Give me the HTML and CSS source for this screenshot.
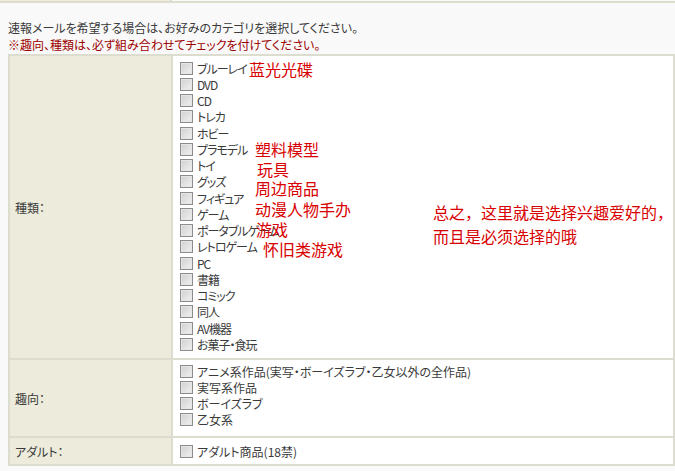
FILE: index.html
```html
<!DOCTYPE html>
<html lang="ja">
  <head>
    <meta charset="UTF-8" />
    <title>カテゴリ選択</title>
    <link rel="stylesheet" href="styles.css">
  </head>
  <body>
    <div class="prev">
      <div class="prev-l"></div>
      <div class="prev-r"></div>
    </div>

    <div class="wrap">
      <p class="lead">速報メールを希望する場合は、お好みのカテゴリを選択してください。</p>
      <p class="warn">※趣向、種類は、必ず組み合わせてチェックを付けてください。</p>

      <table class="cat">
        <tr>
          <th>種類：</th>
          <td class="kind">
            <label class="opt"><input type="checkbox" />ブルーレイ</label>
            <label class="opt"><input type="checkbox" />DVD</label>
            <label class="opt"><input type="checkbox" />CD</label>
            <label class="opt"><input type="checkbox" />トレカ</label>
            <label class="opt"><input type="checkbox" />ホビー</label>
            <label class="opt"><input type="checkbox" />プラモデル</label>
            <label class="opt"><input type="checkbox" />トイ</label>
            <label class="opt"><input type="checkbox" />グッズ</label>
            <label class="opt"><input type="checkbox" />フィギュア</label>
            <label class="opt"><input type="checkbox" />ゲーム</label>
            <label class="opt"><input type="checkbox" />ポータブルゲーム</label>
            <label class="opt"><input type="checkbox" />レトロゲーム</label>
            <label class="opt"><input type="checkbox" />PC</label>
            <label class="opt"><input type="checkbox" />書籍</label>
            <label class="opt"><input type="checkbox" />コミック</label>
            <label class="opt"><input type="checkbox" />同人</label>
            <label class="opt"><input type="checkbox" />AV機器</label>
            <label class="opt"><input type="checkbox" />お菓子・食玩</label>
          </td>
        </tr>
        <tr>
          <th>趣向：</th>
          <td class="taste">
            <label class="opt"><input type="checkbox" />アニメ系作品(実写・ボーイズラブ・乙女以外の全作品)</label>
            <label class="opt"><input type="checkbox" />実写系作品</label>
            <label class="opt"><input type="checkbox" />ボーイズラブ</label>
            <label class="opt"><input type="checkbox" />乙女系</label>
          </td>
        </tr>
        <tr>
          <th>アダルト：</th>
          <td class="adult">
            <label class="opt"><input type="checkbox" />アダルト商品(18禁)</label>
          </td>
        </tr>
      </table>
    </div>

    <!-- 手写的批注 -->
    <span class="note n1">蓝光光碟</span>
    <span class="note n2">塑料模型</span>
    <span class="note n3">玩具</span>
    <span class="note n4">周边商品</span>
    <span class="note n5">动漫人物手办</span>
    <span class="note n6">游戏</span>
    <span class="note n7">怀旧类游戏</span>
    <p class="note sum">总之，这里就是选择兴趣爱好的，<br />而且是必须选择的哦</p>
  </body>
</html>
```

FILE: styles.css
```css
* {
  margin: 0;
  padding: 0;
  box-sizing: border-box;
}
body {
  position: relative;
  background: #f9f9f9;
  color: #3a3a3a;
  font-family: "Noto Sans CJK JP", "Liberation Sans", sans-serif;
  font-size: 12px;
  font-feature-settings: "palt";
}

/* 上一块表格的底边 */
.prev {
  display: flex;
  height: 3px;
  border-bottom: 2px solid #dcdccf;
}
.prev-l {
  width: 172px;
  background: #ecebdc;
  border-right: 2px solid #dcdccf;
}
.prev-r {
  flex: 1;
  background: #f9f9f9;
}

.wrap {
  padding: 16px 0 0 8px;
}
.lead,
.warn {
  line-height: 17px;
  white-space: nowrap;
}
.warn {
  color: #9b0000;
}

table.cat {
  width: 667px;
  margin-top: 1px;
  background: #dcdccf;
  border-spacing: 2px;
}
.cat th {
  width: 161px;
  background: #ecebdc;
  font-weight: normal;
  text-align: left;
  vertical-align: middle;
  padding-left: 5px;
}
.cat td {
  background: #fff;
  vertical-align: top;
  padding-left: 4px;
}
td.kind {
  padding-top: 4px;
  padding-bottom: 5.5px;
  letter-spacing: -1px;
}
td.taste {
  padding-top: 3px;
  padding-bottom: 8px;
}
td.adult {
  padding-top: 5px;
  padding-bottom: 4.75px;
}

.opt {
  display: flex;
  align-items: center;
  height: 16.25px;
  white-space: nowrap;
}
.opt input {
  appearance: none;
  -webkit-appearance: none;
  width: 13px;
  height: 13px;
  margin: 0 4px 0 3px;
  border: 1px solid #8c8c8c;
  background: linear-gradient(135deg, #cfcfcf, #f2f2f2);
  box-shadow: inset 0 0 0 1px #e6e6e6;
}

.note {
  position: absolute;
  color: #d80000;
  font-family: "Noto Sans CJK SC", sans-serif;
  font-size: 16px;
  line-height: 18px;
  white-space: nowrap;
  font-feature-settings: normal;
}
.n1 { left: 249px; top: 59.5px; }
.n2 { left: 255px; top: 140px; }
.n3 { left: 257px; top: 159.5px; }
.n4 { left: 255px; top: 179px; }
.n5 { left: 255px; top: 199.5px; }
.n6 { left: 256px; top: 219.5px; }
.n7 { left: 263px; top: 239.5px; }
.sum {
  left: 433px;
  top: 200px;
  line-height: 24px;
}
```
